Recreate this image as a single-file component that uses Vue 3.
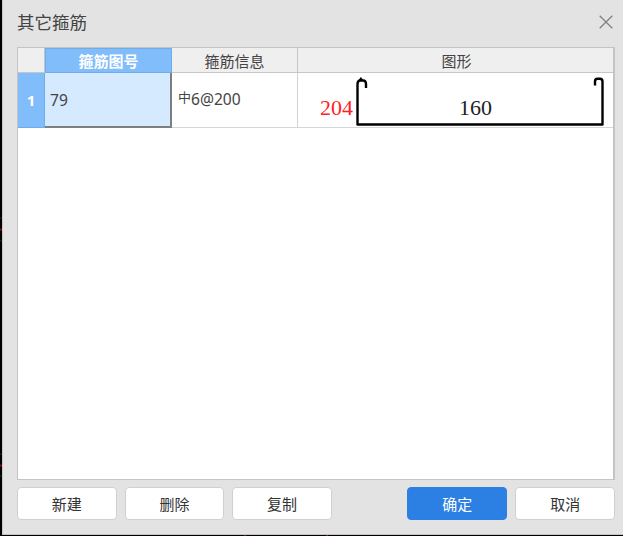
<script setup>
const leftActions = ['新建', '删除', '复制']
const columns = ['箍筋图号', '箍筋信息', '图形']
const row = { index: 1, code: '79', info: '6@200', height: 204, width: 160 }
</script>

<template>
  <div class="screen">
    <svg class="backdrop" width="623" height="536" aria-hidden="true">
      <path d="M0 219l2-2M0 240l2 2M0 455l2-2M0 475l2 2" stroke="#063f0b" />
      <path d="M0 229.5h2M0 465.5h2" stroke="#8a0a0a" stroke-width="2" />
      <path d="M244 535.5h2M326 535.5h2" stroke="#8a0a0a" />
    </svg>
    <section class="dialog">
      <header class="titlebar">
        <span class="title">其它箍筋</span>
        <svg class="close" width="14" height="14" viewBox="0 0 14 14">
          <path d="M0.7 0.7L13.3 13.3M13.3 0.7L0.7 13.3" fill="none" stroke="#808080" stroke-width="1.3" />
        </svg>
      </header>

      <div class="table">
        <div class="row head">
          <div class="cell corner"></div>
          <div v-for="(c, i) in columns" :key="c" class="cell" :class="{ active: i === 0 }">{{ c }}</div>
        </div>
        <div class="row body">
          <div class="cell index">{{ row.index }}</div>
          <div class="cell selected">{{ row.code }}</div>
          <div class="cell info"><span class="grade">中</span><span>{{ row.info }}</span></div>
          <div class="cell shape">
            <svg width="315" height="54" viewBox="298 73 315 54">
              <path d="M366 88V84Q366 80.5 363 80.5H360.5Q357.5 80.5 357.5 84V124.5H602.5V81.5Q602.5 78.8 600 78.8H597.5Q595 78.8 595 81.5V85.5" fill="none" stroke="#000" stroke-width="2.4" stroke-linejoin="round" />
              <path d="M358 81L360.8 77L364 81Z" fill="#000" />
              <text class="dim red" x="320" y="115">{{ row.height }}</text>
              <text class="dim" x="459" y="115">{{ row.width }}</text>
            </svg>
          </div>
        </div>
      </div>

      <footer class="actions">
        <button v-for="a in leftActions" :key="a" class="btn">{{ a }}</button>
        <span class="spacer"></span>
        <button class="btn primary">确定</button>
        <button class="btn">取消</button>
      </footer>
    </section>
  </div>
</template>

<style>
body { margin: 0; overflow: hidden; }
</style>

<style scoped>
* { box-sizing: border-box; }
.screen {
  position: relative;
  width: 623px;
  height: 536px;
  padding: 0 0 1px 2px;
  background: #000;
  color: #444;
  font-family: "Noto Sans", "Noto Sans CJK SC", sans-serif;
  overflow: hidden;
}
.backdrop { position: absolute; left: 0; top: 0; }
.dialog {
  position: relative;
  display: flex;
  flex-direction: column;
  height: 535px;
  padding: 0 8px 0 14px;
  background: #e3e3e3;
  border-left: 1px solid #c8c8c8;
  border-bottom: 1px solid #c4c4c4;
}
.titlebar {
  display: flex;
  align-items: center;
  justify-content: space-between;
  height: 47px;
  padding-bottom: 4px;
  padding-right: 2px;
  font-family: "Noto Sans CJK SC", sans-serif;
  font-size: 17.5px;
}
.title { line-height: 24px; }
.close { display: block; }
.table {
  height: 433px;
  background: #fff;
  border: 1px solid #c4c4c4;
  border-right-width: 2px;
}
.row { display: grid; grid-template-columns: 27px 127px 126px 1fr; }
.head { height: 25px; }
.body { height: 55px; }
.cell { border-right: 1px solid #d2d2d2; border-bottom: 1px solid #d6d6d6; }
.cell:last-child { border-right: 0; }
.head .cell {
  display: flex;
  align-items: center;
  justify-content: center;
  padding-top: 2px;
  background: #efefef;
  border-color: #c6c6c6;
  font-family: "Noto Sans CJK SC", sans-serif;
  font-size: 15px;
  line-height: 20px;
}
.head .cell:last-child { padding-left: 2px; }
.head .cell.active {
  padding-top: 1px;
  background: #81bcfb;
  border: 1px solid #70abeb;
  color: #fff;
  font-weight: 700;
}
.cell.index {
  display: flex;
  align-items: center;
  justify-content: center;
  background: #81bcfb;
  border-color: #70abeb;
  color: #fff;
  font-size: 15px;
  font-weight: 700;
}
.cell.selected {
  display: flex;
  align-items: center;
  padding-left: 5px;
  background: #d6eaff;
  border-right: 2px solid #7f7f7f;
  border-bottom: 2px solid #7f7f7f;
  font-size: 15.6px;
}
.cell.info {
  display: flex;
  align-items: center;
  padding: 0 0 2px 6px;
  font-size: 15.6px;
}
.grade {
  width: 13px;
  padding-bottom: 4px;
  font-family: "Noto Sans CJK SC", sans-serif;
  font-size: 13px;
  line-height: 16px;
}
.shape svg { display: block; }
.dim { font-family: "Liberation Serif", serif; font-size: 22px; fill: #222; }
.dim.red { fill: #f22; }
.actions { display: flex; gap: 8px; padding-top: 7px; }
.btn {
  width: 99.6px;
  height: 33px;
  padding: 0;
  background: #fff;
  border: 1px solid #d0d0d0;
  border-radius: 4px;
  color: #333;
  font-family: "Noto Sans CJK SC", sans-serif;
  font-size: 15px;
  line-height: 31px;
}
.btn.primary { width: 100.4px; background: #2c80e3; border-color: #2c80e3; color: #fff; }
.spacer { flex: 1; }
</style>
